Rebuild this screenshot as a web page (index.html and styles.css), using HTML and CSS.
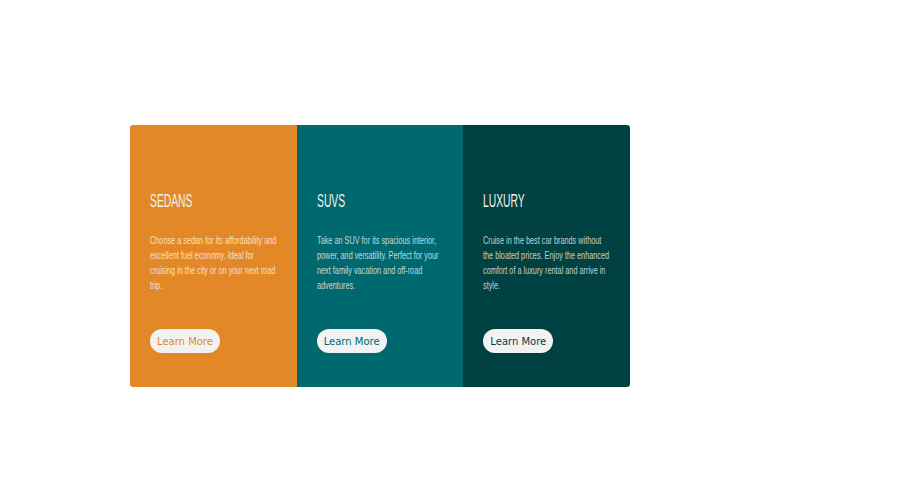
FILE: index.html
```html
<!DOCTYPE html>
<html lang="en">
<head>
<meta charset="utf-8">
<title>3-column preview card</title>
<link rel="stylesheet" href="styles.css">
</head>
<body>
<main class="cards">
  <section class="card card-sedans">
    <h2 class="card-title">SEDANS</h2>
    <p class="card-text">Choose a sedan for its affordability and excellent fuel economy. Ideal for cruising in the city or on your next road trip.</p>
    <button class="card-btn">Learn More</button>
  </section>
  <section class="card card-suvs">
    <h2 class="card-title">SUVS</h2>
    <p class="card-text">Take an SUV for its spacious interior, power, and versatility. Perfect for your next family vacation and off-road adventures.</p>
    <button class="card-btn">Learn More</button>
  </section>
  <section class="card card-luxury">
    <h2 class="card-title">LUXURY</h2>
    <p class="card-text">Cruise in the best car brands without the bloated prices. Enjoy the enhanced comfort of a luxury rental and arrive in style.</p>
    <button class="card-btn">Learn More</button>
  </section>
</main>
</body>
</html>
```
FILE: styles.css
```css
* { box-sizing: border-box; }
html, body { margin: 0; padding: 0; background: #ffffff; }
body { width: 900px; height: 500px; }
.cards {
  display: flex;
  width: 500px;
  margin-left: 130px;
  padding-top: 125px;
}
.card {
  flex: 1;
  height: 262px;
  padding: 66px 20px 0 20px;
  display: flex;
  flex-direction: column;
  align-items: flex-start;
  overflow: hidden;
}
.card-sedans { background: #e38826; border-radius: 3px 0 0 3px; }
.card-suvs { background: #006970; }
.card-luxury { background: #004241; border-radius: 0 3px 3px 0; }
.card-title {
  margin: 0;
  font-family: "Liberation Sans", Arial, sans-serif;
  font-weight: 400;
  font-size: 17.5px;
  line-height: 20px;
  color: #f2f2f2;
  white-space: nowrap;
  transform: scaleX(0.59);
  transform-origin: left top;
}
.card-text {
  margin: 22px 0 0 0;
  width: 192px;
  flex: none;
  font-family: "Liberation Sans", Arial, sans-serif;
  font-size: 11px;
  line-height: 15px;
  color: rgba(255,255,255,0.75);
  transform: scaleX(0.663);
  transform-origin: left top;
}
.card-btn {
  margin-top: auto;
  margin-bottom: 34px;
  height: 24px;
  padding: 0 7px;
  border: 0;
  border-radius: 12px;
  background: #f2f2f2;
  font-family: "DejaVu Sans", sans-serif;
  font-size: 10px;
  cursor: pointer;
}
.card-sedans .card-btn { color: #e38826; }
.card-suvs .card-btn { color: #006970; }
.card-luxury .card-btn { color: #004241; }
```
